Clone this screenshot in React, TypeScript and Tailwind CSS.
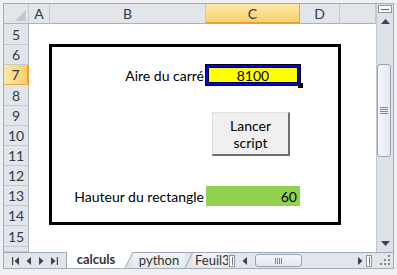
import React from 'react'

type Row = { n: string; h: string; active?: boolean }

const rows: Row[] = [
  { n: '5', h: 'h-[21px]' },
  { n: '6', h: 'h-[20px]' },
  { n: '7', h: 'h-[20px]', active: true },
  { n: '8', h: 'h-[21px]' },
  { n: '9', h: 'h-[20px]' },
  { n: '10', h: 'h-[20px]' },
  { n: '11', h: 'h-[20px]' },
  { n: '12', h: 'h-[20px]' },
  { n: '13', h: 'h-[20px]' },
  { n: '14', h: 'h-[20px]' },
  { n: '15', h: 'h-[21px]' },
  { n: '', h: 'h-[5px]' },
]

function Tri({ dir, bar }: { dir: 'l' | 'r' | 'u' | 'd'; bar?: boolean }) {
  if (dir === 'u') {
    return (
      <svg width="9" height="5" viewBox="0 0 9 5">
        <path d="M0 5 L4.5 0 L9 5 Z" fill="#3b4350" />
      </svg>
    )
  }
  if (dir === 'd') {
    return (
      <svg width="9" height="5" viewBox="0 0 9 5">
        <path d="M0 0 L4.5 5 L9 0 Z" fill="#3b4350" />
      </svg>
    )
  }
  return (
    <svg width={bar ? 7 : 5} height="8" viewBox={bar ? '0 0 7 8' : '0 0 5 8'}>
      {dir === 'l' ? (
        <>
          {bar && <rect x="0" y="0" width="1.2" height="8" fill="#3b4350" />}
          <path d={bar ? 'M7 0 L2.5 4 L7 8 Z' : 'M5 0 L0.5 4 L5 8 Z'} fill="#3b4350" />
        </>
      ) : (
        <>
          <path d="M0 0 L4.5 4 L0 8 Z" fill="#3b4350" />
          {bar && <rect x="5.8" y="0" width="1.2" height="8" fill="#3b4350" />}
        </>
      )}
    </svg>
  )
}

function Splitter() {
  return (
    <div className="w-[6px] h-[12px] bg-white border border-[#8c96a3] flex items-center justify-center">
      <div className="w-[1px] h-[8px] bg-[#6b7582]" />
    </div>
  )
}

export default function App() {
  const head =
    'h-[20px] flex items-center justify-center border-r border-b border-r-[#c5cad1] border-b-[#a9b3bf] bg-[#e2e6eb] text-[14px] text-[#2e3a48]'

  return (
    <div className="w-[397px] h-[275px] bg-[#eef0f3] overflow-hidden pt-[3px] pl-[3px] font-['Lato',sans-serif]">
      <div className="w-[391px] h-[266px] border border-[#a3acb7] flex flex-col bg-[#e2e6eb]">
        <div className="flex h-[248px]">
          {/* sheet */}
          <div className="w-[372px] flex flex-col">
            <div className="flex">
              <div className="w-[25px] h-[20px] border-r border-b border-r-[#c5cad1] border-b-[#a9b3bf] bg-[#e2e6eb] flex items-end justify-end p-[2px]">
                <svg width="11" height="11" viewBox="0 0 11 11">
                  <path d="M11 0 L11 11 L0 11 Z" fill="#c3c8ce" />
                </svg>
              </div>
              <div className={`w-[21px] ${head}`}>A</div>
              <div className={`w-[156px] ${head}`}>B</div>
              <div className="w-[94px] h-[20px] flex items-center justify-center border-r border-b-2 border-r-[#e3a64a] border-b-[#f29a36] bg-gradient-to-b from-[#fde8a8] to-[#f9d06a] text-[14px] text-[#2e3a48]">
                C
              </div>
              <div className={`w-[40px] ${head}`}>D</div>
              <div className={`w-[36px] ${head}`}></div>
            </div>

            <div className="flex h-[228px] overflow-hidden">
              <div className="w-[25px] flex flex-col">
                {rows.map((r) =>
                  r.active ? (
                    <div
                      key={r.n}
                      className={`${r.h} flex items-center justify-center border-r-2 border-b border-r-[#f29a36] border-b-[#e3a64a] bg-gradient-to-r from-[#fde8a8] to-[#f9d06a] text-[14px] text-[#2e3a48]`}
                    >
                      {r.n}
                    </div>
                  ) : (
                    <div
                      key={r.n || 'x'}
                      className={`${r.h} flex items-center justify-center border-r border-b border-r-[#a9b3bf] border-b-[#c5cad1] bg-[#e2e6eb] text-[14px] text-[#2e3a48]`}
                    >
                      {r.n}
                    </div>
                  ),
                )}
              </div>

              <div className="relative w-[347px] bg-white grid grid-cols-[21px_156px_94px_40px_36px] grid-rows-[21px_20px_20px_21px_20px_20px_20px_20px_20px_20px_21px_5px] text-[14px] text-black">
                <div className="col-start-2 row-start-3 flex items-center justify-end pr-[2px] whitespace-nowrap">
                  Aire du carré
                </div>
                <div className="col-start-3 row-start-3 relative">
                  <div className="absolute -inset-[1px] border border-black">
                    <div className="w-full h-full border-2 border-[#0000ff]">
                      <div className="w-full h-full border border-black bg-[#ffff00] flex items-center justify-center">
                        8100
                      </div>
                    </div>
                  </div>
                  <div className="absolute right-[-3px] bottom-[-3px] w-[5px] h-[5px] bg-black" />
                </div>

                <div className="col-start-2 row-start-9 flex items-center justify-end pr-[2px] whitespace-nowrap">
                  Hauteur du rectangle
                </div>
                <div className="col-start-3 row-start-9 bg-[#92d050] flex items-center justify-end pr-[3px]">
                  60
                </div>

                <div className="absolute left-[20px] top-[20px] w-[292px] h-[181px] border-[3px] border-black pointer-events-none" />

                <div className="absolute left-[183px] top-[88px] w-[78px] h-[44px] bg-[#f0f0f0] border-t border-l border-t-[#e0e0e0] border-l-[#e0e0e0] border-r-2 border-b-2 border-r-[#6e6e6e] border-b-[#6e6e6e] flex flex-col items-center justify-center leading-[17px] text-[14px] text-black">
                  <span>Lancer</span>
                  <span>script</span>
                </div>
              </div>
            </div>
          </div>

          {/* vertical scrollbar */}
          <div className="w-[17px] flex flex-col bg-[#dde2e9] border-l border-[#c2c8d0]">
            <div className="h-[8px] mx-[1px] mt-[1px] border border-[#8c96a3] bg-white flex items-center justify-center">
              <div className="w-[8px] h-[1px] bg-[#59636f]" />
            </div>
            <div className="h-[16px] flex items-center justify-center">
              <Tri dir="u" />
            </div>
            <div className="h-[35px]" />
            <div className="w-[14px] h-[93px] rounded-[3px] border border-[#98a3b0] bg-gradient-to-r from-[#f5f7fa] to-[#e3e8ee] flex flex-col items-center justify-center gap-[1px]">
              <div className="w-[8px] h-[1px] bg-[#7f8a98]" />
              <div className="w-[8px] h-[1px] bg-[#7f8a98]" />
              <div className="w-[8px] h-[1px] bg-[#7f8a98]" />
              <div className="w-[8px] h-[1px] bg-[#7f8a98]" />
            </div>
            <div className="flex-1" />
            <div className="h-[17px] flex items-center justify-center">
              <Tri dir="d" />
            </div>
          </div>
        </div>

        {/* tab bar */}
        <div className="h-[16px] flex items-stretch bg-[#e2e6eb] text-[13px] text-[#333]">
          <div className="w-[63px] flex items-center justify-around px-[4px] border-t border-r border-[#9ea8b4]">
            <Tri dir="l" bar />
            <Tri dir="l" />
            <Tri dir="r" />
            <Tri dir="r" bar />
          </div>
          <div className="w-[58px] bg-white flex items-center justify-center font-bold leading-none pb-[1px]">
            calculs
          </div>
          <svg width="8" height="16" viewBox="0 0 8 16" className="shrink-0">
            <path d="M0 16 L0 0 L8 0 Z" fill="#ffffff" />
            <path d="M0 16 L8 0" stroke="#9ea8b4" strokeWidth="1" />
          </svg>
          <div className="w-[52px] flex items-center justify-center border-t border-[#9ea8b4] bg-gradient-to-b from-[#f2f4f7] to-[#e4e8ed] leading-none pb-[1px]">
            python
          </div>
          <svg width="8" height="16" viewBox="0 0 8 16" className="shrink-0">
            <path d="M0 0.5 L8 0.5" stroke="#9ea8b4" strokeWidth="1" />
            <path d="M0 16 L8 0" stroke="#9ea8b4" strokeWidth="1" />
          </svg>
          <div className="w-[35px] overflow-hidden flex items-center border-t border-[#9ea8b4] bg-gradient-to-b from-[#f2f4f7] to-[#e4e8ed] leading-none pb-[1px] pl-[2px] whitespace-nowrap">
            Feuil3
          </div>
          <div className="flex items-center border-t border-[#9ea8b4] px-[1px]">
            <Splitter />
          </div>
          <div className="flex-1 flex items-center border-t border-[#9ea8b4] pl-[6px] pr-[4px]">
            <Tri dir="l" />
            <div className="ml-[8px] w-[47px] h-[13px] rounded-[3px] border border-[#98a3b0] bg-gradient-to-b from-[#f5f7fa] to-[#e3e8ee] flex items-center justify-center gap-[1px]">
              <div className="w-[1px] h-[6px] bg-[#7f8a98]" />
              <div className="w-[1px] h-[6px] bg-[#7f8a98]" />
              <div className="w-[1px] h-[6px] bg-[#7f8a98]" />
              <div className="w-[1px] h-[6px] bg-[#7f8a98]" />
            </div>
            <div className="flex-1" />
            <Tri dir="r" />
            <div className="ml-[3px]">
              <Splitter />
            </div>
          </div>
          <div className="w-[17px] flex items-end justify-end border-t border-[#9ea8b4] p-[2px]">
            <svg width="11" height="11" viewBox="0 0 11 11">
              <rect x="8" y="0" width="2" height="2" fill="#7c8794" />
              <rect x="4" y="4" width="2" height="2" fill="#7c8794" />
              <rect x="8" y="4" width="2" height="2" fill="#7c8794" />
              <rect x="0" y="8" width="2" height="2" fill="#7c8794" />
              <rect x="4" y="8" width="2" height="2" fill="#7c8794" />
              <rect x="8" y="8" width="2" height="2" fill="#7c8794" />
            </svg>
          </div>
        </div>
      </div>
    </div>
  )
}
